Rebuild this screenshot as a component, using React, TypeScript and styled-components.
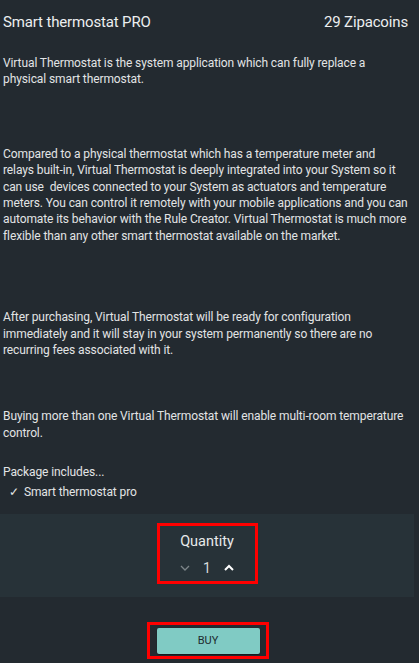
import React from "react";
import styled, { createGlobalStyle } from "styled-components";

const Global = createGlobalStyle`
  html, body { margin: 0; padding: 0; background: #232a30; }
  body { font-family: Roboto, "Noto Sans", sans-serif; color: #e4e6e7; }
`;

const Page = styled.div`
  width: 419px;
  min-height: 663px;
  background: #232a30;
  display: flex;
  flex-direction: column;
`;

const Header = styled.div`
  display: flex;
  justify-content: space-between;
  align-items: center;
  padding: 13px 11px 0 3px;
  font-size: 15px;
  letter-spacing: -0.15px;
  height: 17px;
  color: #eceeef;
`;

const Body = styled.div`
  padding: 0 10.5px 0 3px;
  font-size: 12px;
  letter-spacing: -0.1px;
  line-height: 16.4px;
  color: #e2e4e5;
`;

const Para = styled.p<{ $top: number }>`
  margin: ${(p) => p.$top}px 0 0;
`;

const Check = styled.div`
  display: flex;
  align-items: center;
  gap: 5px;
  padding-left: 6px;
  margin-top: 3px;
`;

const QtySection = styled.div`
  margin: 14px 5px 0 0;
  background: #273238;
  height: 83px;
  display: flex;
  justify-content: center;
  align-items: flex-start;
  padding-top: 9px;
  box-sizing: border-box;
`;

const RedBox = styled.div`
  border: 3px solid #ff0000;
  box-sizing: border-box;
`;

const QtyBox = styled(RedBox)`
  width: 101px;
  height: 61px;
  display: flex;
  flex-direction: column;
  align-items: center;
  padding-top: 7px;
`;

const QtyLabel = styled.div`
  font-size: 14.5px;
  color: #e8eaeb;
`;

const Stepper = styled.div`
  display: flex;
  align-items: center;
  gap: 12px;
  margin-top: 11px;
  font-size: 14px;
  line-height: 14px;
  color: #d8dadb;
`;

const BuyWrap = styled.div`
  display: flex;
  justify-content: center;
  padding-top: 25px;
  padding-right: 3px;
`;

const BuyBox = styled(RedBox)`
  width: 122px;
  height: 37px;
  display: flex;
  align-items: center;
  justify-content: center;
`;

const BuyButton = styled.button`
  width: 103px;
  height: 26px;
  border: none;
  border-radius: 2px;
  background: #80cbc4;
  color: #1d2a2e;
  font-family: Roboto, sans-serif;
  font-size: 11px;
  box-shadow: 0 1px 1px rgba(0, 0, 0, 0.4);
  padding: 0;
`;

const Chevron = ({ up, color }: { up?: boolean; color: string }) => (
  <svg width="12" height="12" viewBox="0 0 12 12">
    <path
      d={up ? "M2 8 L6 4 L10 8" : "M2 4 L6 8 L10 4"}
      fill="none"
      stroke={color}
      strokeWidth={up ? 2 : 1.3}
    />
  </svg>
);

export default function App() {
  return (
    <Page>
      <Global />
      <Header>
        <span>Smart thermostat PRO</span>
        <span>29 Zipacoins</span>
      </Header>
      <Body>
        <Para $top={25}>
          Virtual Thermostat is the system application which can fully replace a physical smart thermostat.
        </Para>
        <Para $top={58}>
          Compared to a physical thermostat which has a temperature meter and relays built-in, Virtual Thermostat is
          deeply integrated into your System so it can use&nbsp; devices connected to your System as actuators and
          temperature meters. You can control it remotely with your mobile applications and you can automate its
          behavior with the Rule Creator. Virtual Thermostat is much more flexible than any other smart thermostat
          available on the market.
        </Para>
        <Para $top={65}>
          After purchasing, Virtual Thermostat will be ready for configuration immediately and it will stay in your
          system permanently so there are no recurring fees associated with it.
        </Para>
        <Para $top={50}>
          Buying more than one Virtual Thermostat will enable multi-room temperature control.
        </Para>
        <Para $top={23}>Package includes...</Para>
        <Check>
          <span>✓</span>
          <span>Smart thermostat pro</span>
        </Check>
      </Body>
      <QtySection>
        <QtyBox>
          <QtyLabel>Quantity</QtyLabel>
          <Stepper>
            <Chevron color="#7d8589" />
            <span>1</span>
            <Chevron up color="#ffffff" />
          </Stepper>
        </QtyBox>
      </QtySection>
      <BuyWrap>
        <BuyBox>
          <BuyButton>BUY</BuyButton>
        </BuyBox>
      </BuyWrap>
    </Page>
  );
}
